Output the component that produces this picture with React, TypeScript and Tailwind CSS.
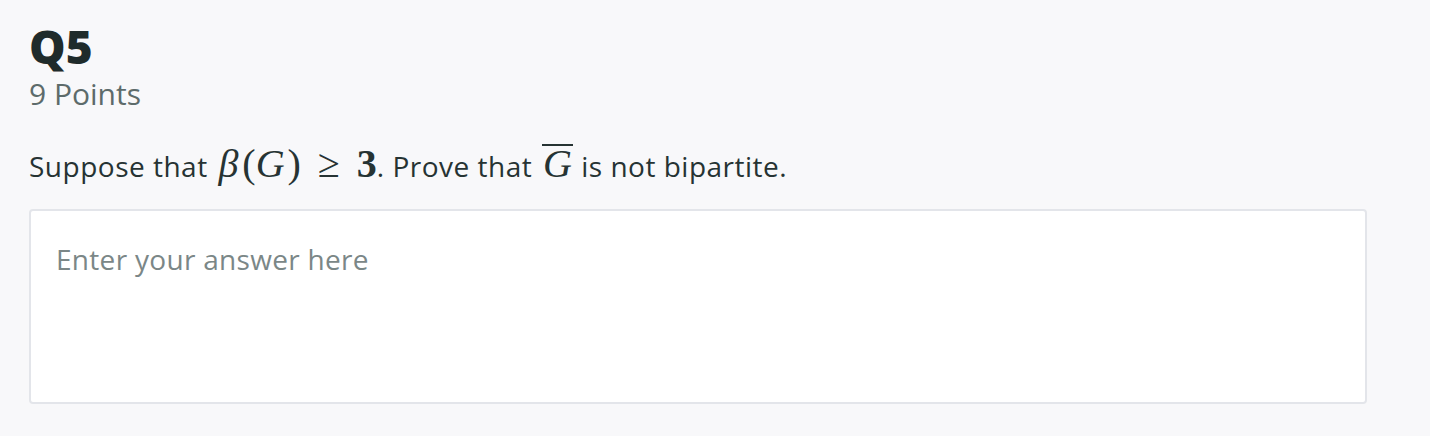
export default function App() {
  return (
    <div className="min-h-[436px] w-full bg-[#f8f8fa] px-[29px] pt-[20px] font-['Open_Sans',sans-serif] text-[#263333]">
      <div className="w-[1338px]">
        <h1 className="text-[46px] font-extrabold leading-[52px] text-[#1f2b2b]">Q5</h1>
        <div className="mt-[4px] text-[30px] leading-[36px] text-[#5d6b6b]">9 Points</div>

        <p className="mt-[32px] flex items-baseline text-[28px] leading-[40px] tracking-[0.5px] text-[#263333]">
          <span>Suppose that&nbsp;</span>
          <span className="ml-[3px] font-['Liberation_Serif',serif] text-[40px] tracking-normal">
            <i>β</i>
            <span className="ml-[4px]">(</span>
            <i className="pr-[3px]">G</i>)<span className="mx-[17px]">≥</span>
            <b>3</b>
          </span>
          <span>.&nbsp;Prove that&nbsp;</span>
          <span className="ml-[2px] border-t-2 border-[#263333] px-[1px] font-['Liberation_Serif',serif] text-[40px] leading-[36px]">
            <i>G</i>
          </span>
          <span>&nbsp;is not bipartite.</span>
        </p>

        <div className="mt-[23px] h-[195px] rounded-[4px] border-2 border-[#e3e5ea] bg-white px-[25px] pt-[28px]">
          <span className="text-[28px] leading-[40px] tracking-[0.3px] text-[#7b8787]">Enter your answer here</span>
        </div>
      </div>
    </div>
  );
}
